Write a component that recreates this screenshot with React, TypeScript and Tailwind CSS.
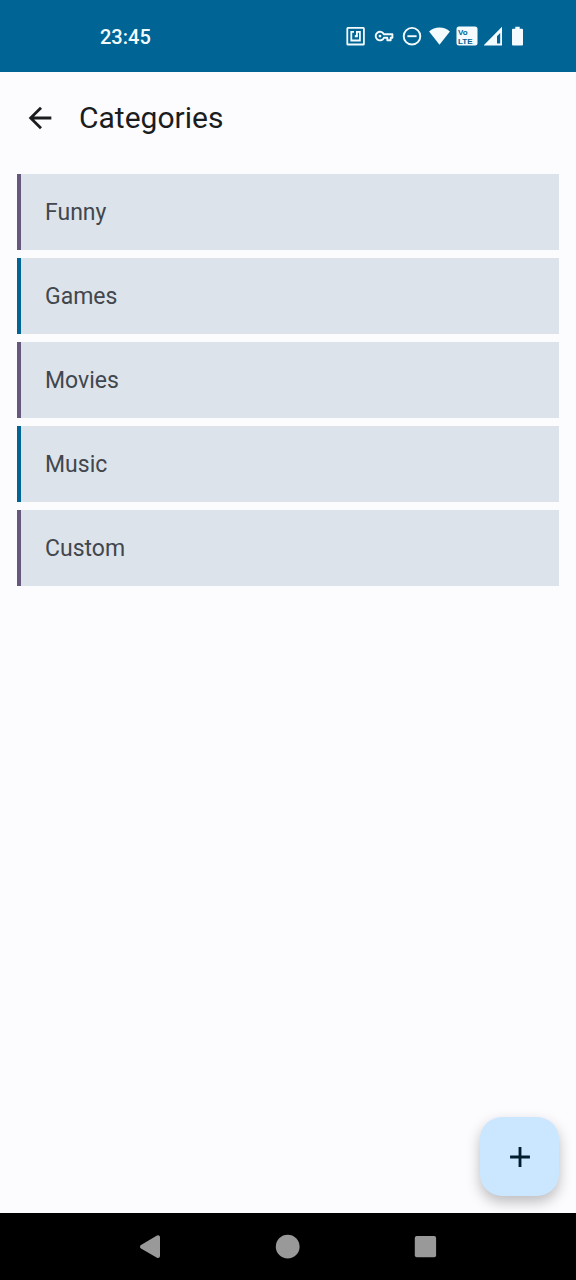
import React from "react";

const categories: string[] = ["Funny", "Games", "Movies", "Music", "Custom"];

function StatusIcons() {
  return (
    <div className="flex items-center gap-1.5 text-[#f4fbff]" aria-hidden="true">
      <svg width="22" height="22" viewBox="0 0 22 22" fill="none" stroke="currentColor" strokeWidth="1.8">
        <rect x="3.3" y="2.9" width="16.6" height="16.6" rx="0.6" />
        <path d="M10 6.900H7.300v8.600h8.600V6.900h-3v4.800" />
        <path d="M10.800 11.200h2.800" strokeWidth="2.200" />
      </svg>
      <svg width="22" height="22" viewBox="0 0 22 22" fill="none" stroke="currentColor" strokeWidth="1.9" strokeLinejoin="round">
        <path d="M11.9 9.3h8.500v3.500h-1.700v2.500h-3.400v-2.500h-3.400a4.300 4.300 0 1 1 0-3.500z" />
        <circle cx="8" cy="11.100" r="1.400" fill="currentColor" stroke="none" />
      </svg>
      <svg width="22" height="22" viewBox="0 0 22 22" fill="none" stroke="currentColor" strokeWidth="1.9">
        <circle cx="12" cy="11.200" r="8.300" />
        <path d="M7.400 11.200h9.200" />
      </svg>
      <svg width="22" height="22" viewBox="0 0 22 22" fill="currentColor">
        <path d="M11.500 19.700 1.100 6.500C3.900 3.800 7.500 2.400 11.500 2.400s7.600 1.400 10.400 4.100z" />
      </svg>
      <svg width="22" height="22" viewBox="0 0 22 22">
        <rect x="0.500" y="1.500" width="21" height="19" rx="2.500" fill="currentColor" />
        <text x="2" y="9.500" fontFamily="Liberation Sans, sans-serif" fontSize="8" fontWeight="700" fill="#006494">Vo</text>
        <text x="2" y="18.800" fontFamily="Liberation Sans, sans-serif" fontSize="8" fontWeight="700" fill="#006494">LTE</text>
      </svg>
      <svg width="22" height="22" viewBox="0 0 22 22" fill="currentColor" fillRule="evenodd">
        <path d="M18 1.800V20.500H-.600zM16.200 8 13 11.200V18.500h3.200z" />
      </svg>
      <svg width="11" height="22" viewBox="0 0 11 22" fill="currentColor">
        <path d="M3.300 1.800h4.400v2H10a1 1 0 0 1 1 1v14.600a1 1 0 0 1-1 1H1a1 1 0 0 1-1-1V4.800a1 1 0 0 1 1-1h2.300z" />
      </svg>
    </div>
  );
}

export default function App() {
  return (
    <div className="flex min-h-screen flex-col bg-[#fcfcff] font-['Roboto',sans-serif] text-[#1a1c1e]">
      <div className="flex h-[72px] items-center justify-between bg-[#006494] pr-[53px] pl-[100px]">
        <time className="pt-0.5 text-xl leading-7 font-medium text-[#f4fbff]">23:45</time>
        <StatusIcons />
      </div>

      <header className="flex h-[91px] items-center gap-[22px] px-[23px]">
        <button type="button" aria-label="Back" className="shrink-0">
          <svg width="34" height="34" viewBox="0 0 24 24" fill="currentColor" aria-hidden="true">
            <path d="M20 11H7.830l5.590-5.590L12 4l-8 8 8 8 1.410-1.410L7.830 13H20v-2z" />
          </svg>
        </button>
        <h1 className="text-[30px] leading-10">Categories</h1>
      </header>

      <main className="relative flex flex-1 flex-col px-[17px] pt-[11px] pb-28">
        <ul className="flex flex-col gap-2">
          {categories.map((name, index) => (
            <li key={name}>
              <button
                type="button"
                className={`flex h-[76px] w-full items-center border-l-4 bg-[#dde3ea] pt-0.5 pl-6 text-left text-[23px] text-[#41474d] ${
                  index % 2 === 0 ? "border-[#65587b]" : "border-[#006494]"
                }`}
              >
                {name}
              </button>
            </li>
          ))}
        </ul>

        <button
          type="button"
          aria-label="Add category"
          className="absolute right-[17px] bottom-[17px] flex size-[79px] items-center justify-center rounded-[22px] bg-[#cbe6ff] text-[#001e30] shadow-[0_6px_14px_rgba(0,0,0,0.26)]"
        >
          <svg width="34" height="34" viewBox="0 0 24 24" fill="currentColor" aria-hidden="true">
            <path d="M19 13h-6v6h-2v-6H5v-2h6V5h2v6h6v2z" />
          </svg>
        </button>
      </main>

      <nav aria-label="System navigation" className="relative flex h-[67px] items-center justify-center gap-[104px] bg-black text-[#999999]">
        <button type="button" aria-label="System back">
          <svg width="34" height="34" viewBox="0 0 34 34" fill="currentColor" stroke="currentColor" strokeWidth="4" strokeLinejoin="round" aria-hidden="true">
            <path d="M25 7.300v18.800L9 16.700z" />
          </svg>
        </button>
        <button type="button" aria-label="Home">
          <svg width="34" height="34" viewBox="0 0 34 34" fill="currentColor" aria-hidden="true">
            <circle cx="16.700" cy="16.700" r="11.900" />
          </svg>
        </button>
        <button type="button" aria-label="Recent apps">
          <svg width="34" height="34" viewBox="0 0 34 34" fill="currentColor" aria-hidden="true">
            <rect x="5.800" y="6" width="21.300" height="21.300" rx="2" />
          </svg>
        </button>
      </nav>
    </div>
  );
}
